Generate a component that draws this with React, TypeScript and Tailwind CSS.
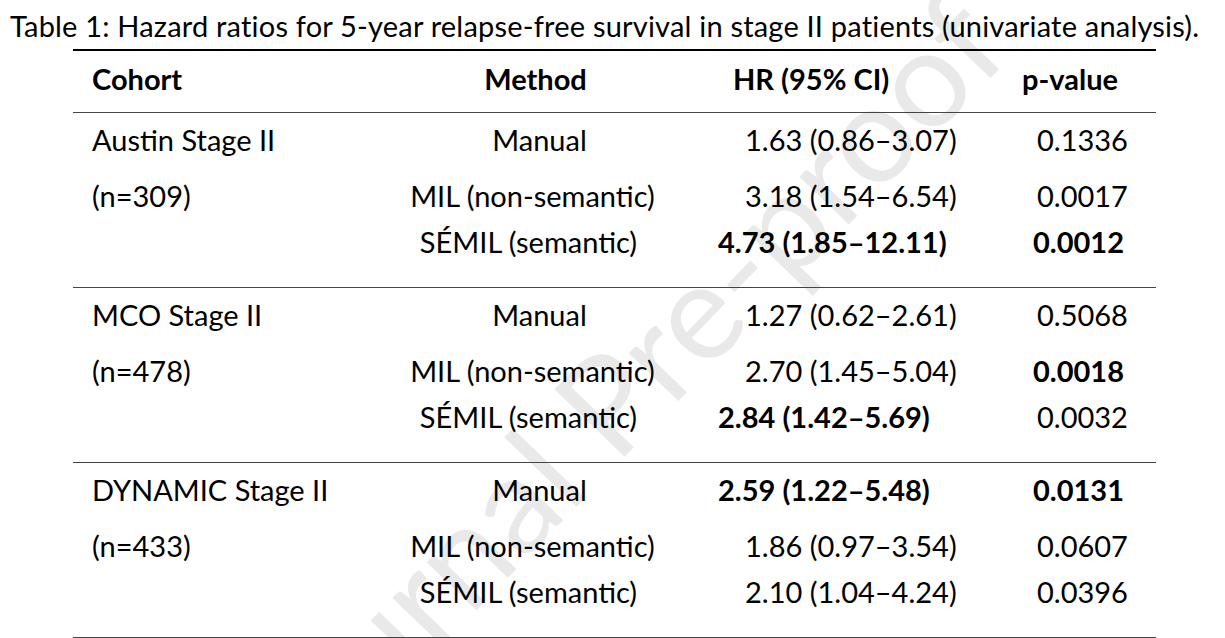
import React from "react";

type Row = {
    cohort?: string;
    method: string;
    hr: string;
    hrBold?: boolean;
    p: string;
    pBold?: boolean;
};

const sections: Row[][] = [
    [
        { cohort: "Austin Stage II", method: "Manual", hr: "1.63 (0.86–3.07)", p: "0.1336" },
        { cohort: "(n=309)", method: "MIL (non-semantic)", hr: "3.18 (1.54–6.54)", p: "0.0017" },
        { method: "SÉMIL (semantic)", hr: "4.73 (1.85–12.11)", hrBold: true, p: "0.0012", pBold: true },
    ],
    [
        { cohort: "MCO Stage II", method: "Manual", hr: "1.27 (0.62–2.61)", p: "0.5068" },
        { cohort: "(n=478)", method: "MIL (non-semantic)", hr: "2.70 (1.45–5.04)", p: "0.0018", pBold: true },
        { method: "SÉMIL (semantic)", hr: "2.84 (1.42–5.69)", hrBold: true, p: "0.0032" },
    ],
    [
        { cohort: "DYNAMIC Stage II", method: "Manual", hr: "2.59 (1.22–5.48)", hrBold: true, p: "0.0131", pBold: true },
        { cohort: "(n=433)", method: "MIL (non-semantic)", hr: "1.86 (0.97–3.54)", p: "0.0607" },
        { method: "SÉMIL (semantic)", hr: "2.10 (1.04–4.24)", p: "0.0396" },
    ],
];

function TableRow({ row, height }: { row: Row; height: string }) {
    return (
        <div className={`grid grid-cols-[327px_265px_335px_156px] items-center ${height}`}>
            <div className="pl-[19px]">{row.cohort}</div>
            <div className={row.method === "Manual" ? "text-center pl-[14px]" : row.method.startsWith("MIL") ? "text-center" : "text-center pr-[8px]"}>
                {row.method}
            </div>
            <div className={row.hrBold ? "pl-[53px] font-bold" : "pl-[80px]"}>{row.hr}</div>
            <div className={row.pBold ? "pl-[33px] font-bold" : "pl-[37px]"}>{row.p}</div>
        </div>
    );
}

export default function App() {
    return (
        <div className="relative w-[1225px] h-[638px] overflow-hidden bg-white text-black font-['Lato',sans-serif] text-[29px] leading-none">
            {/* watermark */}
            <div className="absolute left-[615px] top-[392px] -translate-x-1/2 -translate-y-1/2 -rotate-[46deg] whitespace-nowrap text-[136px] text-[#e9e9e9]">
                Journal Pre-proof
            </div>

            <div className="relative">
                <p className="pl-[10px] pt-[11px] h-[49px] whitespace-nowrap tracking-[0.2px]">
                    Table 1: Hazard ratios for 5-year relapse-free survival in stage II patients (univariate analysis).
                </p>

                <div className="ml-[73px] w-[1083px]">
                    <div className="h-[2px] bg-black" />
                    <div className="grid grid-cols-[327px_265px_335px_156px] items-center h-[61px] pb-[7px] font-bold">
                        <div className="pl-[19px]">Cohort</div>
                        <div className="text-center pl-[6px]">Method</div>
                        <div className="pl-[68px]">HR (95% CI)</div>
                        <div className="pl-[22px]">p-value</div>
                    </div>
                    <div className="h-[1px] bg-[#444]" />

                    {sections.map((rows, i) => (
                        <div key={i}>
                            <TableRow row={rows[0]} height="h-[55px] pb-[3px]" />
                            <TableRow row={rows[1]} height="h-[55px]" />
                            <TableRow row={rows[2]} height="h-[36px]" />
                            <div className="h-[28px]" />
                            <div className="h-[1px] bg-[#444]" />
                        </div>
                    ))}
                </div>
            </div>
        </div>
    );
}
